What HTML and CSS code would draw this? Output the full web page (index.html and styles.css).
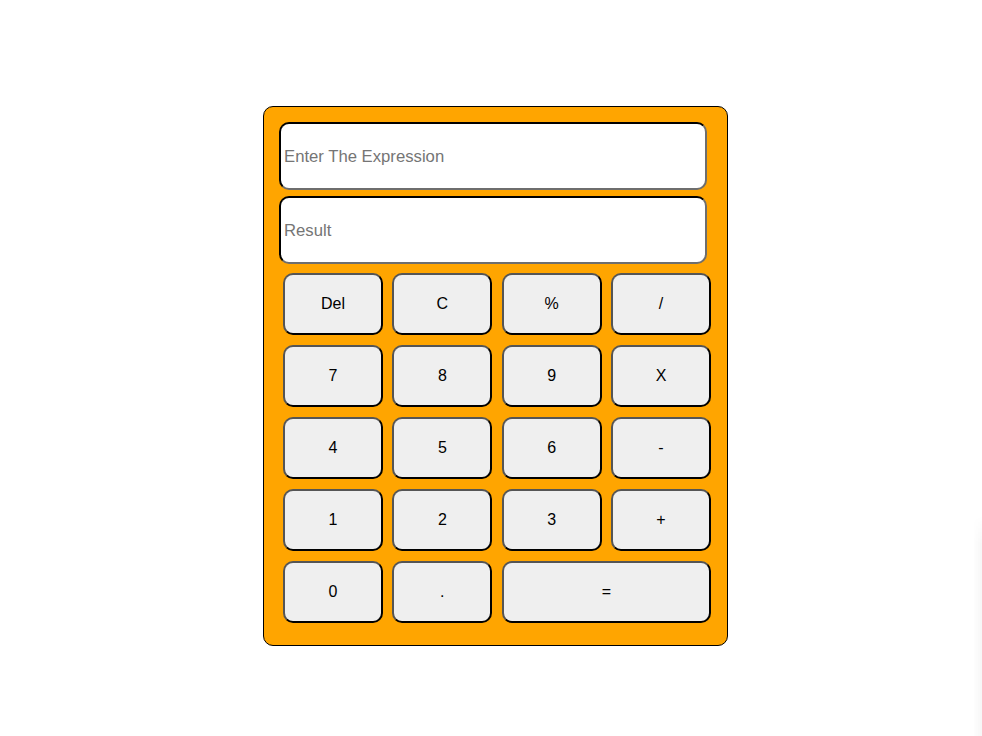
FILE: index.html
```html
<!DOCTYPE html>
<html>
<head>
<meta charset="utf-8">
<link rel="stylesheet" href="styles.css">
</head>
<body>
<div class="calc">
  <input class="field" type="text" placeholder="Enter The Expression">
  <input class="field" type="text" placeholder="Result">
  <div class="keys">
    <button class="key">Del</button>
    <button class="key">C</button>
    <button class="key">%</button>
    <button class="key">/</button>
    <button class="key">7</button>
    <button class="key">8</button>
    <button class="key">9</button>
    <button class="key">X</button>
    <button class="key">4</button>
    <button class="key">5</button>
    <button class="key">6</button>
    <button class="key">-</button>
    <button class="key">1</button>
    <button class="key">2</button>
    <button class="key">3</button>
    <button class="key">+</button>
    <button class="key">0</button>
    <button class="key">.</button>
    <button class="key wide">=</button>
  </div>
</div>
<div class="edge-shade"></div>
</body>
</html>
```
FILE: styles.css
```css
html, body {
  margin: 0;
  padding: 0;
  background: #ffffff;
  font-family: "Liberation Sans", Arial, sans-serif;
}
body {
  padding: 106px 0 0 263px;
  height: 736px;
  box-sizing: border-box;
  overflow: hidden;
}
.calc {
  width: 465px;
  height: 540px;
  box-sizing: border-box;
  background: #ffa500;
  border: 1px solid #000;
  border-radius: 10px;
  padding: 15px 0 0 15px;
  display: flex;
  flex-direction: column;
  align-items: flex-start;
}
.field {
  width: 428px;
  height: 68px;
  box-sizing: border-box;
  border: 2px inset #000;
  border-top-color: #1a1a1a;
  border-left-color: #1a1a1a;
  border-bottom-color: #6e6e6e;
  border-right-color: #6e6e6e;
  border-radius: 10px;
  padding: 2px 3px 0 3px;
  margin: 0 0 6px 0;
  font-family: "Liberation Sans", Arial, sans-serif;
  font-size: 16.7px;
  color: #000;
  background: #fff;
  outline: none;
}
.field::placeholder {
  color: #757575;
}
.keys {
  margin: 3px 0 0 4px;
  display: grid;
  grid-template-columns: repeat(4, 100px);
  grid-auto-rows: 62px;
  column-gap: 9.34px;
  row-gap: 10px;
}
.key {
  box-sizing: border-box;
  background: #efefef;
  border: 2px solid #000;
  border-top-color: #555;
  border-left-color: #555;
  border-radius: 10px;
  font-family: "Liberation Sans", Arial, sans-serif;
  font-size: 16px;
  color: #000;
  padding: 0;
}
.key.wide {
  grid-column: span 2;
}
.edge-shade {
  position: absolute;
  right: 0;
  top: 515px;
  width: 9px;
  height: 221px;
  background: linear-gradient(to right, rgba(0,0,0,0), rgba(0,0,0,0.035));
  -webkit-mask-image: linear-gradient(to bottom, transparent, #000 30px);
  mask-image: linear-gradient(to bottom, transparent, #000 30px);
}
```
